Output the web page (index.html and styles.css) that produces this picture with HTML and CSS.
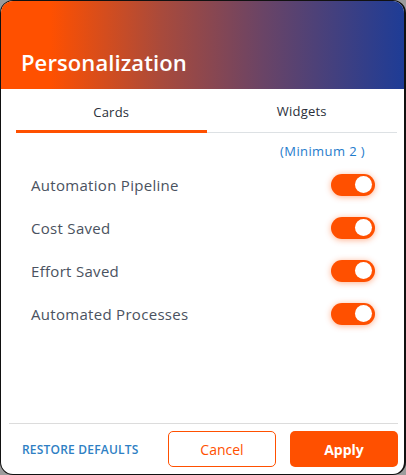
FILE: index.html
```html
<!DOCTYPE html>
<html>
<head>
<meta charset="utf-8">
<link rel="stylesheet" href="styles.css">
</head>
<body>
<div class="dialog">
  <div class="header"><h1 class="title">Personalization</h1></div>
  <div class="tabs">
    <div class="tab active">Cards</div>
    <div class="tab">Widgets</div>
  </div>
  <div class="content">
    <div class="hint">(Minimum 2 )</div>
    <div class="row"><span class="label">Automation Pipeline</span><span class="toggle"><span class="knob"></span></span></div>
    <div class="row"><span class="label">Cost Saved</span><span class="toggle"><span class="knob"></span></span></div>
    <div class="row"><span class="label">Effort Saved</span><span class="toggle"><span class="knob"></span></span></div>
    <div class="row"><span class="label">Automated Processes</span><span class="toggle"><span class="knob"></span></span></div>
  </div>
  <div class="footer">
    <button class="restore">RESTORE DEFAULTS</button>
    <button class="btn cancel">Cancel</button>
    <button class="btn apply">Apply</button>
  </div>
</div>
</body>
</html>
```
FILE: styles.css
```css
* { box-sizing: border-box; }
html, body { margin: 0; padding: 0; }
body {
  background: #9c9c9c;
  font-family: "Open Sans", "Liberation Sans", sans-serif;
  width: 406px;
  height: 475px;
}
.dialog {
  width: 406px;
  height: 475px;
  background: #fff;
  border: 1px solid #111;
  border-right-width: 2px;
  border-radius: 13px;
  overflow: hidden;
  display: flex;
  flex-direction: column;
}
.header {
  height: 88px;
  flex: none;
  background: linear-gradient(90deg, #ff5000 0%, #ff5000 12%, #a84a3c 40%, #6a4466 65%, #1e3c96 100%);
  display: flex;
  align-items: flex-end;
  padding: 0 0 12px 20px;
}
.title {
  margin: 0;
  color: #fff;
  font-size: 22px;
  font-weight: 600;
  letter-spacing: 0.1px;
}
.tabs {
  display: flex;
  margin: 0 7px 0 15px;
  border-bottom: 1px solid #dde1e4;
  height: 44px;
}
.tab {
  flex: 1;
  display: flex;
  align-items: center;
  justify-content: center;
  font-size: 13px;
  color: #2a2f3a;
  padding-top: 1px;
  letter-spacing: 0.2px;
}
.tab.active {
  border-bottom: 3px solid #ff5000;
  margin-bottom: -1px;
  padding-top: 4px;
}
.content {
  flex: 1;
  padding: 9px 29px 0 30px;
}
.hint {
  text-align: right;
  color: #1f7ccc;
  font-size: 13px;
  letter-spacing: 0.4px;
  padding-right: 10px;
  height: 21px;
}
.row {
  display: flex;
  align-items: center;
  justify-content: space-between;
  height: 43px;
}
.label {
  color: #4a5260;
  font-size: 15px;
  font-weight: 500;
  letter-spacing: 0.3px;
}
.toggle {
  width: 44px;
  height: 22px;
  border-radius: 11px;
  background: #ff5000;
  position: relative;
  box-shadow: 0 1px 6px rgba(255, 80, 0, 0.45);
}
.knob {
  position: absolute;
  top: 2.5px;
  right: 3px;
  width: 17px;
  height: 17px;
  border-radius: 50%;
  background: #fff;
}
.footer {
  flex: none;
  margin: 0 6px 0 8px;
  border-top: 1px solid #dcdcdc;
  height: 51px;
  display: flex;
  align-items: center;
}
.restore {
  flex: none;
  background: none;
  border: none;
  color: #2f7fc4;
  font-family: inherit;
  font-size: 12px;
  font-weight: 600;
  letter-spacing: 0.2px;
  padding: 0 0 0 13px;
  width: 159px;
  text-align: left;
  margin-top: 1px;
}
.btn {
  flex: none;
  width: 108px;
  height: 36px;
  border-radius: 5px;
  font-family: inherit;
  font-size: 14px;
}
.cancel {
  background: #fff;
  border: 1px solid #ff5000;
  color: #ff5000;
  margin-right: 14px;
}
.apply {
  background: #ff5000;
  border: none;
  color: #fff;
  font-weight: 700;
}
```
